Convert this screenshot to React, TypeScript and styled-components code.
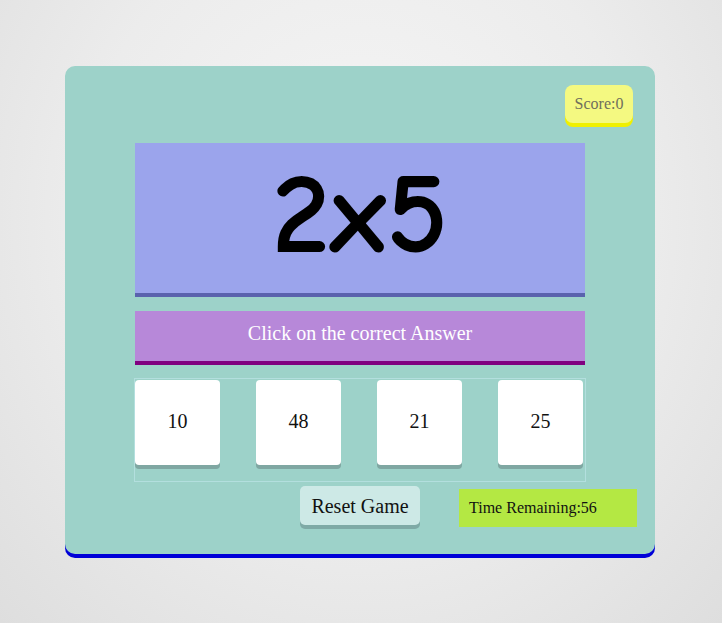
import React from "react";
import styled, { createGlobalStyle } from "styled-components";

const Global = createGlobalStyle`
  html, body { margin: 0; padding: 0; }
  body {
    min-height: 623px;
    background: radial-gradient(ellipse at 50% 35%, #f6f6f6 0%, #ececec 55%, #dedede 100%);
    font-family: "Liberation Serif", "Times New Roman", serif;
  }
  #root { padding: 66px 0 0 65px; }
`;

const Card = styled.div`
  box-sizing: border-box;
  width: 590px;
  height: 488px;
  background: #9dd2c9;
  border-radius: 10px;
  box-shadow: 0 4px 0 #0000d8;
  padding: 19px 22px 0 70px;
  display: flex;
  flex-direction: column;
`;

const ScoreRow = styled.div`
  display: flex;
  justify-content: flex-end;
`;

const Score = styled.div`
  box-sizing: border-box;
  width: 68px;
  height: 38px;
  background: #f4f981;
  border-radius: 8px;
  box-shadow: 0 4px 0 #f0f000;
  color: #6f6f5c;
  font-size: 16px;
  display: flex;
  align-items: center;
  justify-content: center;
`;

const Column = styled.div`
  width: 450px;
  display: flex;
  flex-direction: column;
`;

const Question = styled.div`
  box-sizing: border-box;
  margin-top: 20px;
  height: 154px;
  background: #9ba4ec;
  border-bottom: 4px solid #5a62ad;
  display: flex;
  align-items: center;
  justify-content: center;
  font-family: "Comic Sans MS", "Comic Neue", "DejaVu Sans", sans-serif;
  font-size: 116px;
  font-weight: 700;
  color: #000;
  padding-bottom: 8px;
`;

const Instruction = styled.div`
  box-sizing: border-box;
  margin-top: 14px;
  height: 54px;
  background: #b788d9;
  border-bottom: 4px solid #800080;
  color: #fff;
  font-size: 20px;
  display: flex;
  align-items: center;
  justify-content: center;
  padding-bottom: 5px;
`;

const Choices = styled.div`
  margin-top: 14px;
  box-sizing: border-box;
  height: 102px;
  outline: 1px solid #b3dfde;
  display: flex;
  gap: 36px;
  padding-top: 1px;
`;

const Choice = styled.div`
  box-sizing: border-box;
  width: 85px;
  height: 85px;
  background: #fff;
  border-radius: 4px;
  box-shadow: 0 4px 0 #7fa7a2;
  display: flex;
  align-items: center;
  justify-content: center;
  font-size: 20px;
  color: #111;
  cursor: pointer;
  padding-bottom: 3px;
`;

const BottomRow = styled.div`
  margin-top: 5px;
  padding-left: 165px;
  display: flex;
  align-items: flex-start;
  gap: 39px;
`;

const ResetButton = styled.button`
  flex: none;
  width: 120px;
  height: 39px;
  border: none;
  border-radius: 5px;
  background: #cde9e6;
  box-shadow: 0 4px 0 #7faaa6;
  font-family: "Liberation Serif", "Times New Roman", serif;
  font-size: 20px;
  color: #111;
  padding: 2px 0 0;
  cursor: pointer;
`;

const Timer = styled.div`
  flex: none;
  box-sizing: border-box;
  margin-top: 3px;
  width: 178px;
  height: 38px;
  background: #b4e843;
  font-size: 16px;
  color: #111;
  padding-left: 10px;
  display: flex;
  align-items: center;
`;

export default function App() {
  const choices = [10, 48, 21, 25];
  return (
    <>
      <Global />
      <Card>
        <ScoreRow>
          <Score>Score:0</Score>
        </ScoreRow>
        <Column>
          <Question>2x5</Question>
          <Instruction>Click on the correct Answer</Instruction>
          <Choices>
            {choices.map((c) => (
              <Choice key={c}>{c}</Choice>
            ))}
          </Choices>
        </Column>
        <BottomRow>
          <ResetButton>Reset Game</ResetButton>
          <Timer>Time Remaining:56</Timer>
        </BottomRow>
      </Card>
    </>
  );
}
